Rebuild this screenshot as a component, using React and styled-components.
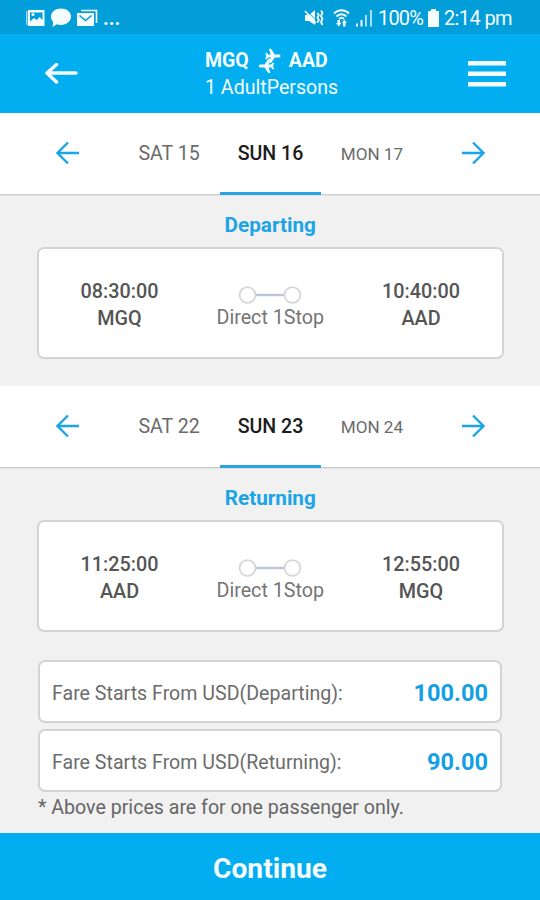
import React from 'react'
import styled, { createGlobalStyle } from 'styled-components'

const GlobalStyle = createGlobalStyle`
  * {
    box-sizing: border-box;
  }
  body {
    margin: 0;
    background: #f1f1f1;
    font-family: Roboto, 'Liberation Sans', sans-serif;
  }
`

const Screen = styled.div`
  width: 540px;
  height: 900px;
  display: flex;
  flex-direction: column;
  background: #f1f1f1;
  overflow: hidden;
  white-space: nowrap;
`

const StatusBar = styled.div`
  flex: none;
  height: 34px;
  padding: 2px 28px 0 25px;
  display: flex;
  align-items: center;
  justify-content: space-between;
  background: #019ed9;
  color: #f4fcff;
`

const StatusGroup = styled.div`
  display: flex;
  align-items: center;
  gap: ${(props) => props.$gap}px;
`

const StatusText = styled.span`
  font-size: 20px;
  line-height: 32px;
  font-weight: ${(props) => props.$weight || 400};
  letter-spacing: ${(props) => props.$spacing || 0}px;
`

const Header = styled.header`
  flex: none;
  height: 79px;
  padding: 0 34px 0 44px;
  display: grid;
  grid-template-columns: 161px 1fr 39px;
  align-items: center;
  background: #02aef0;
  color: #f4fcff;
`

const Icon = styled.svg`
  display: block;
  flex: none;
  fill: none;
  stroke: currentColor;
`

const RouteIcon = styled(Icon)`
  margin: 0 7px 0 9px;
`

const Trip = styled.div`
  padding-top: 2px;
`

const Route = styled.div`
  display: flex;
  align-items: center;
  height: 27px;
  font-size: 19.5px;
  font-weight: 700;
`

const Passengers = styled.div`
  font-size: 19.6px;
  line-height: 28px;
`

const DateBar = styled.nav`
  flex: none;
  height: 82px;
  padding: 0 16px 0 17px;
  display: grid;
  grid-template-columns: repeat(5, 1fr);
  background: #fff;
  box-shadow: inset 0 -1px #cccccc, 0 1px #e4e4e4;
`

const DateTab = styled.div`
  display: flex;
  align-items: center;
  justify-content: center;
  padding-top: 2px;
  font-size: ${(props) => (props.$small ? 17.1 : 19.6)}px;
  font-weight: ${(props) => (props.$active ? 500 : 400)};
  color: ${(props) => (props.$active ? '#1c1c1c' : '#6b6b6b')};
  border-bottom: 3px solid ${(props) => (props.$active ? '#27a5e3' : 'transparent')};
`

const DateArrow = styled(DateTab)`
  padding-top: 0;
  color: #1ba4e8;
`

const Leg = styled.section`
  flex: none;
  height: 191px;
  padding: 0 36.5px 0 37px;
`

const LegTitle = styled.h2`
  margin: 0;
  padding-top: 9px;
  height: 52px;
  font-size: 20.7px;
  line-height: 42px;
  font-weight: 700;
  text-align: center;
  color: #1ba4e6;
`

const Card = styled.div`
  height: 112px;
  padding-top: 3px;
  display: grid;
  grid-template-columns: 161px 1fr 161px;
  align-items: center;
  background: #fff;
  border: 2px solid #d3d3d3;
  border-radius: 7px;
  text-align: center;
`

const Stop = styled.div`
  font-size: 19.8px;
  font-weight: 500;
  line-height: 27px;
  color: #555;
`

const Stops = styled.div`
  display: flex;
  flex-direction: column;
  align-items: center;
  padding-top: 8px;
  font-size: 19.7px;
  line-height: 28px;
  color: #757575;
`

const Fares = styled.div`
  flex: 1;
  padding: 1px 38px 0;
`

const FareRow = styled.div`
  height: 63px;
  margin-bottom: 6px;
  padding: 3px 12px 0;
  display: flex;
  align-items: center;
  justify-content: space-between;
  background: #fff;
  border: 2px solid #d3d3d3;
  border-radius: 7px;
  font-size: 19.6px;
  color: #6c6c6c;
`

const Price = styled.strong`
  font-size: 23.6px;
  font-weight: 700;
  color: #149fe5;
`

const Note = styled.p`
  margin: -3px 0 0;
  padding-top: 1px;
  font-size: 19.6px;
  line-height: 24px;
  color: #666;
`

const ContinueButton = styled.button`
  flex: none;
  height: 67px;
  padding: 3px 0 0;
  border: 0;
  background: #02aef0;
  color: #f4fcff;
  font-family: inherit;
  font-size: 28.2px;
  font-weight: 700;
`

const ArrowIcon = ({ flip }) => (
  <Icon width="24" height="24" viewBox="0 0 24 24" strokeWidth="2.3">
    <path
      d={flip ? 'M1 12h21M12 1.500 22.500 12 12 22.500' : 'M23 12H2M12 1.500 1.500 12 12 22.500'}
    />
  </Icon>
)

const ImageIcon = () => (
  <Icon width="20" height="18" viewBox="0 0 20 18" strokeWidth="0">
    <path fill="#9bdaf3" d="M1 2h1.500v14H1z" />
    <path
      fill="currentColor"
      fillRule="evenodd"
      d="M3 1h16.500v16H3zM5 3.500v9l4-3.500 3 2 2.500-3 3 3V3.500z"
    />
    <circle cx="8" cy="5.500" r="1.500" fill="currentColor" />
  </Icon>
)

const ChatIcon = () => (
  <Icon width="22" height="20" viewBox="0 0 22 20" strokeWidth="0">
    <path
      fill="currentColor"
      d="M11 .5c5.600 0 10 3.500 10 8s-4.400 8.500-10 8.500c-1.500 0-2.900-.2-4-.7L2.500 19l.7-5C1.800 12.600 1 10.700 1 8.500c0-4.500 4.400-8 10-8z"
    />
  </Icon>
)

const MailIcon = () => (
  <Icon width="21" height="18" viewBox="0 0 21 18">
    <path strokeWidth="1.600" d="M4 1.500h15.500V14" />
    <path fill="currentColor" stroke="none" d="M0 4h17v13H0z" />
    <path stroke="#019ed9" strokeWidth="1.600" d="m2.500 6.500 6 5 6-5" />
  </Icon>
)

const MuteIcon = () => (
  <Icon width="20" height="18" viewBox="0 0 20 18">
    <path fill="currentColor" stroke="none" d="M1 6h4l6-5v15l-6-4H1z" />
    <path stroke="#019ed9" strokeWidth=".8" d="M2.500 1 12 11" />
    <path strokeWidth="1.700" d="M1 2l11 12" />
    <path strokeWidth="1.800" d="m13.500 4 1.300 2-1.300 2.500 1.300 2.500-1.300 2.500M17 1.500 18.500 4 17 7l1.500 3-1.500 3 1.500 3" />
  </Icon>
)

const WifiIcon = () => (
  <Icon width="17" height="18" viewBox="0 0 17 18">
    <path strokeWidth="1.900" d="M1 4.500C5 .2 12 .2 16 4.500M3.500 7.500c3-3 7-3 10 0M6 10c1.600-1.500 3.500-1.500 5 0" />
    <path fill="currentColor" stroke="none" d="M3 14h1.500v-3h2.500v3h1.500l-2.800 3.500zM8.800 14l2.500-3.500 2.500 3.500h-1.300v3.500h-2.500V14z" />
  </Icon>
)

const SignalIcon = () => (
  <Icon width="18" height="18" viewBox="0 0 18 18" strokeWidth="2">
    <path d="M2 14.500v3M6.500 11v6.500" />
    <path stroke="#a8e0f6" d="M11 6v11.500M16 1v16.500" />
  </Icon>
)

const BatteryIcon = () => (
  <Icon width="11" height="18" viewBox="0 0 11 18" strokeWidth="0">
    <path fill="currentColor" d="M3 0h5v2h3v16H0V2h3z" />
  </Icon>
)

const BackIcon = () => (
  <Icon
    width="34"
    height="22"
    viewBox="0 0 34 22"
    strokeWidth="3.500"
    strokeLinecap="round"
    strokeLinejoin="round"
  >
    <path d="M32 10H3M12.500 1.500 3 10l9.500 9" />
  </Icon>
)

// two planes flying in opposite directions
const PlanesIcon = () => (
  <RouteIcon width="24" height="26" viewBox="0 0 24 26" fill="currentColor" strokeWidth="0">
    <g fill="currentColor">
      <path d="M22.500 8c0-.9-.7-1.500-1.700-1.500h-4L13 .8h-2.200L12.700 6.500h-2.500L8.800 4.700H7.300L8.200 8l-.9 3.300h1.500l1.400-1.800h2.500L10.800 15H13l3.800-5.500h4c1 0 1.700-.6 1.700-1.500z" />
      <path d="M.8 18c0-.9.7-1.500 1.700-1.500h4l3.800-5.700h2.200l-1.900 5.700h2.500l1.400-1.800H16l-.9 3.300.9 3.300h-1.500l-1.400-1.800h-2.500l1.900 5.500h-2.200l-3.800-5.500h-4C1.500 19.500.8 18.900.8 18z" />
    </g>
  </RouteIcon>
)

const MenuIcon = () => (
  <Icon width="39" height="28" viewBox="0 0 39 28" strokeWidth="4.500">
    <path d="M1 3.200h38M1 13.700h38M1 24.200h38" />
  </Icon>
)

const StopsIcon = () => (
  <Icon width="64" height="18" viewBox="0 0 64 18">
    <path stroke="#b8c5dc" strokeWidth="2.400" d="M17 9h29" />
    <circle cx="9.500" cy="9" r="7.900" stroke="#d6d6da" strokeWidth="1.800" />
    <circle cx="54.500" cy="9" r="7.900" stroke="#d6d6da" strokeWidth="1.800" />
  </Icon>
)

const Dates = ({ dates }) => (
  <DateBar>
    <DateArrow>
      <ArrowIcon />
    </DateArrow>
    <DateTab>{dates[0]}</DateTab>
    <DateTab $active>{dates[1]}</DateTab>
    <DateTab $small>{dates[2]}</DateTab>
    <DateArrow>
      <ArrowIcon flip />
    </DateArrow>
  </DateBar>
)

const Flight = ({ title, from, to }) => (
  <Leg>
    <LegTitle>{title}</LegTitle>
    <Card>
      <Stop>
        <div>{from.time}</div>
        <div>{from.code}</div>
      </Stop>
      <Stops>
        <StopsIcon />
        Direct 1Stop
      </Stops>
      <Stop>
        <div>{to.time}</div>
        <div>{to.code}</div>
      </Stop>
    </Card>
  </Leg>
)

const App = () => (
  <>
    <GlobalStyle />
    <Screen>
      <StatusBar>
        <StatusGroup $gap={5}>
          <ImageIcon />
          <ChatIcon />
          <MailIcon />
          <StatusText $weight={700}>...</StatusText>
        </StatusGroup>
        <StatusGroup $gap={5}>
          <StatusGroup $gap={9}>
            <MuteIcon />
            <WifiIcon />
          </StatusGroup>
          <SignalIcon />
          <StatusText $spacing={-0.9}>100%</StatusText>
          <BatteryIcon />
          <StatusText $spacing={-0.6}>2:14 pm</StatusText>
        </StatusGroup>
      </StatusBar>
      <Header>
        <BackIcon />
        <Trip>
          <Route>
            MGQ
            <PlanesIcon />
            AAD
          </Route>
          <Passengers>1 AdultPersons</Passengers>
        </Trip>
        <MenuIcon />
      </Header>
      <Dates dates={['SAT 15', 'SUN 16', 'MON 17']} />
      <Flight
        title="Departing"
        from={{ time: '08:30:00', code: 'MGQ' }}
        to={{ time: '10:40:00', code: 'AAD' }}
      />
      <Dates dates={['SAT 22', 'SUN 23', 'MON 24']} />
      <Flight
        title="Returning"
        from={{ time: '11:25:00', code: 'AAD' }}
        to={{ time: '12:55:00', code: 'MGQ' }}
      />
      <Fares>
        <FareRow>
          Fare Starts From USD(Departing):
          <Price>100.00</Price>
        </FareRow>
        <FareRow>
          Fare Starts From USD(Returning):
          <Price>90.00</Price>
        </FareRow>
        <Note>* Above prices are for one passenger only.</Note>
      </Fares>
      <ContinueButton>Continue</ContinueButton>
    </Screen>
  </>
)

export default App
